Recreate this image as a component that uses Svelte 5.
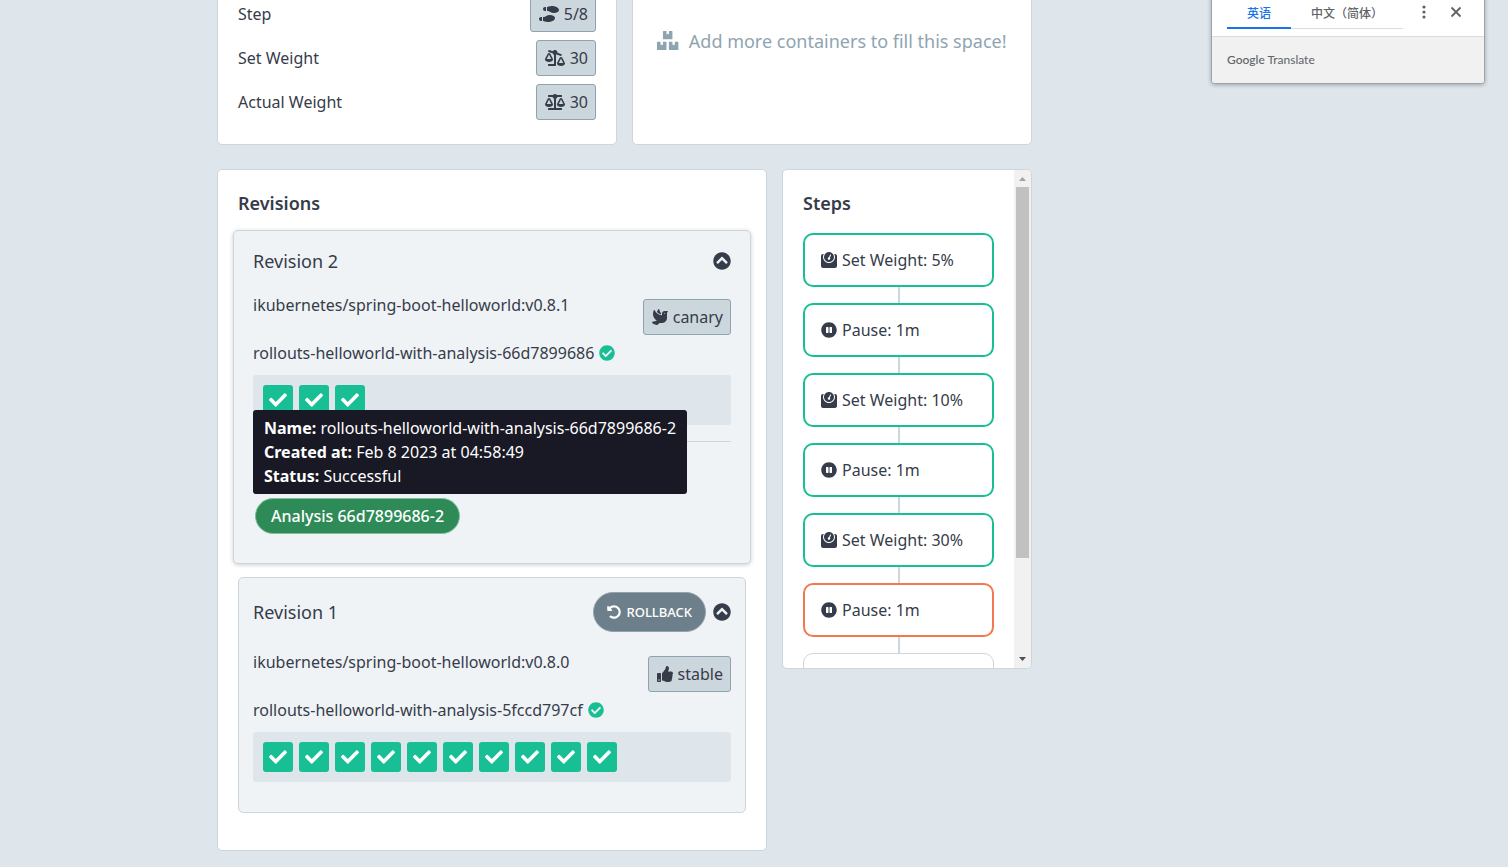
<script>
  const icons = {
    check: [512, 'M173.898 439.404l-166.4-166.4c-9.997-9.997-9.997-26.206 0-36.204l36.203-36.204c9.997-9.998 26.207-9.998 36.204 0L192 312.69 432.095 72.596c9.997-9.997 26.207-9.997 36.204 0l36.203 36.204c9.997 9.997 9.997 26.206 0 36.204l-294.4 294.401c-9.998 9.997-26.207 9.997-36.204-.001z'],
    checkCircle: [512, 'M504 256c0 136.967-111.033 248-248 248S8 392.967 8 256 119.033 8 256 8s248 111.033 248 248zM227.314 387.314l184-184c6.248-6.248 6.248-16.379 0-22.627l-22.627-22.627c-6.248-6.249-16.379-6.249-22.628 0L216 308.118l-70.059-70.059c-6.248-6.248-16.379-6.248-22.628 0l-22.627 22.627c-6.248 6.248-6.248 16.379 0 22.627l104 104c6.249 6.249 16.379 6.249 22.628.001z'],
    chevronUp: [512, 'M8 256C8 119 119 8 256 8s248 111 248 248-111 248-248 248S8 393 8 256zm231-113.9L103.500 277.600c-9.400 9.400-9.400 24.600 0 33.900l17 17c9.400 9.400 24.600 9.400 33.900 0L256 226.900l101.600 101.600c9.400 9.400 24.600 9.400 33.900 0l17-17c9.400-9.400 9.400-24.600 0-33.900L273 142.100c-9.400-9.400-24.600-9.400-34 0z'],
    pause: [512, 'M256 8C119 8 8 119 8 256s111 248 248 248 248-111 248-248S393 8 256 8zm-16 328c0 8.800-7.200 16-16 16h-48c-8.800 0-16-7.200-16-16V176c0-8.800 7.200-16 16-16h48c8.800 0 16 7.200 16 16v160zm112 0c0 8.800-7.200 16-16 16h-48c-8.800 0-16-7.200-16-16V176c0-8.800 7.200-16 16-16h48c8.800 0 16 7.200 16 16v160z'],
    weight: [512, 'M448 64h-25.980C438.440 92.330 448 125.010 448 160c0 105.870-86.130 192-192 192S64 265.870 64 160c0-34.990 9.560-67.670 25.980-96H64C28.710 64 0 92.710 0 128v320c0 35.290 28.710 64 64 64h384c35.290 0 64-28.710 64-64V128c0-35.290-28.710-64-64-64zM256 320c88.370 0 160-71.630 160-160S344.370 0 256 0 96 71.630 96 160s71.630 160 160 160zm-.3-151.940l33.580-78.360c3.500-8.170 12.940-11.920 21.030-8.410 8.120 3.480 11.880 12.890 8.410 21l-33.670 78.550C291.730 188 296 197.450 296 208c0 22.090-17.910 40-40 40s-40-17.910-40-40c0-21.980 17.760-39.770 39.700-39.940z'],
    thumbsUp: [512, 'M104 224H24c-13.255 0-24 10.745-24 24v240c0 13.255 10.745 24 24 24h80c13.255 0 24-10.745 24-24V248c0-13.255-10.745-24-24-24zM64 472c-13.255 0-24-10.745-24-24s10.745-24 24-24 24 10.745 24 24-10.745 24-24 24zM384 81.452c0 42.416-25.970 66.208-33.277 94.548h101.723c33.397 0 59.397 27.746 59.553 58.098.084 17.938-7.546 37.249-19.439 49.197l-.11.11c9.836 23.337 8.237 56.037-9.308 79.469 8.681 25.895-.069 57.704-16.382 74.757 4.298 17.598 2.244 32.575-6.148 44.632C440.202 511.587 389.616 512 346.839 512l-2.845-.001c-48.287-.017-87.806-17.598-119.560-31.725-15.957-7.099-36.821-15.887-52.651-16.178-6.540-.12-11.783-5.457-11.783-11.998v-213.770c0-3.200 1.282-6.271 3.558-8.521 39.614-39.144 56.648-80.587 89.117-113.111 14.804-14.832 20.188-37.236 25.393-58.902C282.515 39.293 291.817 0 312 0c24 0 72 8 72 81.452z'],
    undo: [512, 'M255.545 8c-66.269.119-126.438 26.233-170.860 68.685L48.971 40.971C33.851 25.851 8 36.559 8 57.941V192c0 13.255 10.745 24 24 24h134.059c21.382 0 32.090-25.851 16.971-40.971l-41.750-41.750c30.864-28.899 70.801-44.907 113.230-45.273 92.398-.798 170.283 73.977 169.484 169.442C423.236 348.009 349.816 424 256 424c-41.127 0-79.997-14.678-110.630-41.556-4.743-4.161-11.906-3.908-16.368.553L89.340 422.659c-4.872 4.872-4.631 12.815.482 17.433C133.798 479.813 192.074 504 256 504c136.966 0 247.999-111.033 248-247.998C504.001 119.193 392.354 7.755 255.545 8z'],
    boxes: [576, 'M560 288h-80v96l-32-21.300-32 21.300v-96h-80c-8.800 0-16 7.200-16 16v192c0 8.800 7.200 16 16 16h224c8.800 0 16-7.200 16-16V304c0-8.800-7.200-16-16-16zm-384-64h224c8.800 0 16-7.200 16-16V16c0-8.800-7.200-16-16-16h-80v96l-32-21.300L256 96V0h-80c-8.800 0-16 7.200-16 16v192c0 8.800 7.200 16 16 16zm64 64h-80v96l-32-21.300L96 384v-96H16c-8.800 0-16 7.200-16 16v192c0 8.800 7.200 16 16 16h224c8.800 0 16-7.200 16-16V304c0-8.800-7.200-16-16-16z'],
    scale: [640, 'M256 336h-.02c0-16.180 1.340-8.730-85.050-181.510-17.650-35.290-68.190-35.360-85.870 0C-2.060 328.750.02 320.330.02 336H0c0 44.180 57.310 80 128 80s128-35.820 128-80zM128 176l72 144H56l72-144zm511.980 160c0-16.180 1.340-8.730-85.050-181.510-17.650-35.290-68.190-35.360-85.870 0-87.120 174.260-85.040 165.840-85.040 181.510H384c0 44.180 57.310 80 128 80s128-35.820 128-80h-.02zM440 320l72-144 72 144H440zm88 128H352V153.250c23.510-10.290 41.160-31.480 46.390-57.250H528c8.840 0 16-7.160 16-16V48c0-8.840-7.160-16-16-16H383.640C369.040 12.680 346.090 0 320 0s-49.040 12.680-63.640 32H112c-8.840 0-16 7.160-16 16v32c0 8.840 7.160 16 16 16h129.610c5.230 25.760 22.870 46.960 46.390 57.250V448H112c-8.840 0-16 7.160-16 16v32c0 8.840 7.160 16 16 16h416c8.840 0 16-7.160 16-16v-32c0-8.840-7.160-16-16-16z'],
    scaleRight: [640, 'M96 464v32c0 8.840 7.160 16 16 16h224c8.840 0 16-7.160 16-16V153.250c4.560-2 8.920-4.350 12.990-7.120l142.050 47.630c8.380 2.810 17.450-1.710 20.260-10.080l10.170-30.340c2.810-8.380-1.710-17.450-10.080-20.260l-128.400-43.050c.42-3.320 1.010-6.600 1.010-10.030 0-44.180-35.820-80-80-80-29.690 0-55.300 16.360-69.110 40.370L132.960.83c-8.380-2.810-17.450 1.710-20.260 10.080l-10.170 30.340c-2.810 8.380 1.710 17.450 10.080 20.260l132 44.260c7.280 21.250 22.960 38.540 43.380 47.470V448H112c-8.840 0-16 7.160-16 16zM0 304c0 44.180 57.310 80 128 80s128-35.820 128-80h-.02c0-15.670 2.080-7.250-85.050-181.510-17.680-35.360-68.220-35.290-85.870 0C-1.320 295.270.02 287.820.02 304H0zm56-16l72-144 72 144H56zm328.020 144H384c0 44.180 57.310 80 128 80s128-35.820 128-80h-.02c0-15.670 2.080-7.250-85.050-181.510-17.680-35.360-68.220-35.290-85.870 0-86.380 172.780-85.040 165.330-85.040 181.510zM440 416l72-144 72 144H440z'],
    shoes: [640, 'M192 160h32V32h-32c-35.350 0-64 28.650-64 64s28.650 64 64 64zM0 416c0 35.350 28.650 64 64 64h32V352H64c-35.350 0-64 28.650-64 64zm337.460-128c-34.910 0-76.160 13.120-104.730 32-24.790 16.380-44.520 32-104.730 32v128l57.530 15.970c26.210 7.280 53.010 13.120 80.310 15.050 32.690 2.310 65.600.67 97.580-6.200C472.900 481.300 512 429.220 512 384c0-64-84.180-96-174.540-96zM491.420 7.190C459.440.32 426.530-1.330 393.840.99c-27.300 1.930-54.100 7.770-80.310 15.040L256 32v128c60.200 0 79.940 15.620 104.730 32 28.570 18.880 69.820 32 104.730 32C555.810 224 640 192 640 128c0-45.220-39.100-97.300-148.580-120.810z'],
    dove: [512, 'M288 167.200v-28.100c-28.200-36.300-47.100-79.300-54.100-125.200-2.100-13.500-19-18.800-27.800-8.300-21.100 24.900-37.700 54.100-48.900 86.500 34.200 38.300 80 64.600 130.800 75.100zM400 64c-44.200 0-80 35.900-80 80.100v59.400C215.600 197.300 127 133 87 41.800c-5.500-12.500-23.200-13.200-29-.9C41.400 76 32 115.200 32 156.600c0 70.800 34.100 136.900 85.100 185.900 13.200 12.700 26.100 23.200 38.900 32.800l-143.900 36C1.200 414-3.400 426.400 2.600 435.900 20 463.200 62.200 509.600 155.500 512c8 .2 16-2.800 22.100-8.100l65.200-55.900H320c88.400 0 160-71.500 160-159.900V128l32-64H400zm0 96.100c-8.800 0-16-7.200-16-16s7.200-16 16-16 16 7.200 16 16-7.200 16-16 16z'],
  };

  const summary = [
    { label: 'Step', value: '5/8', icon: 'shoes' },
    { label: 'Set Weight', value: '30', icon: 'scaleRight' },
    { label: 'Actual Weight', value: '30', icon: 'scale' },
  ];

  const steps = [
    { icon: 'weight', text: 'Set Weight: 5%', state: 'done' },
    { icon: 'pause', text: 'Pause: 1m', state: 'done' },
    { icon: 'weight', text: 'Set Weight: 10%', state: 'done' },
    { icon: 'pause', text: 'Pause: 1m', state: 'done' },
    { icon: 'weight', text: 'Set Weight: 30%', state: 'done' },
    { icon: 'pause', text: 'Pause: 1m', state: 'current' },
    { state: 'pending' },
  ];

  const revisions = [
    {
      name: 'Revision 2',
      image: 'ikubernetes/spring-boot-helloworld:v0.8.1',
      tag: 'canary',
      tagIcon: 'dove',
      replicaSet: 'rollouts-helloworld-with-analysis-66d7899686',
      pods: 3,
      raised: true,
      analysis: {
        title: 'Analysis 66d7899686-2',
        name: 'rollouts-helloworld-with-analysis-66d7899686-2',
        created: 'Feb 8 2023 at 04:58:49',
        status: 'Successful',
      },
    },
    {
      name: 'Revision 1',
      image: 'ikubernetes/spring-boot-helloworld:v0.8.0',
      tag: 'stable',
      tagIcon: 'thumbsUp',
      replicaSet: 'rollouts-helloworld-with-analysis-5fccd797cf',
      pods: 10,
      rollback: true,
    },
  ];
</script>

{#snippet icon(name)}
  <svg class="icon {name}" viewBox="0 0 {icons[name][0]} 512" aria-hidden="true">
    <path fill="currentColor" fill-rule={name === 'weight' ? 'evenodd' : 'nonzero'} d={icons[name][1]} />
  </svg>
{/snippet}

<main>
  <div class="row">
    <section class="card summary">
      {#each summary as item}
        <div class="summary-item">
          <span>{item.label}</span>
          <span class="tag">{@render icon(item.icon)}{item.value}</span>
        </div>
      {/each}
    </section>
    <section class="card empty">
      {@render icon('boxes')}
      <span>Add more containers to fill this space!</span>
    </section>
  </div>

  <div class="row">
    <section class="card revisions">
      <h3>Revisions</h3>
      {#each revisions as rev}
        <article class="revision" class:raised={rev.raised}>
          <header>
            <h4>{rev.name}</h4>
            {#if rev.rollback}
              <button class="rollback">{@render icon('undo')}ROLLBACK</button>
            {/if}
            <button class="toggle" aria-label="Collapse {rev.name}">{@render icon('chevronUp')}</button>
          </header>
          <div class="image">
            <span>{rev.image}</span>
            <span class="tag">{@render icon(rev.tagIcon)}{rev.tag}</span>
          </div>
          <div class="replica">{rev.replicaSet}{@render icon('checkCircle')}</div>
          <div class="pods">
            {#each Array(rev.pods) as _}
              <span class="pod">{@render icon('check')}</span>
            {/each}
          </div>
          {#if rev.analysis}
            <div class="analysis">
              <div class="tooltip" role="tooltip">
                <div><b>Name:</b> {rev.analysis.name}</div>
                <div><b>Created at:</b> {rev.analysis.created}</div>
                <div><b>Status:</b> {rev.analysis.status}</div>
              </div>
              <button class="run">{rev.analysis.title}</button>
            </div>
          {/if}
        </article>
      {/each}
    </section>

    <section class="card steps">
      <div class="steps-body">
        <h3>Steps</h3>
        {#each steps as step}
          <div class="step {step.state}">
            {#if step.text}
              {@render icon(step.icon)}
              <span>{step.text}</span>
            {/if}
          </div>
        {/each}
      </div>
      <div class="scrollbar" aria-hidden="true">
        <svg viewBox="0 0 17 17"><path fill="#a3a3a3" d="M5 11l3.500-4 3.500 4z" /></svg>
        <div class="track"><div class="thumb"></div></div>
        <svg viewBox="0 0 17 17"><path fill="#505050" d="M5 6l3.500 4L12 6z" /></svg>
      </div>
    </section>
  </div>
</main>

<aside class="translate">
  <div class="translate-bar">
    <div class="tabs">
      <button class="active">英语</button>
      <button>中文（简体）</button>
    </div>
    <button class="tool" aria-label="Options">
      <svg viewBox="0 0 16 16"><g fill="#5f6368"><circle cx="8" cy="3" r="1.600" /><circle cx="8" cy="8" r="1.600" /><circle cx="8" cy="13" r="1.600" /></g></svg>
    </button>
    <button class="tool" aria-label="Close">
      <svg viewBox="0 0 16 16"><path d="M3.500 3.500l9 9m0-9l-9 9" stroke="#5f6368" stroke-width="1.800" /></svg>
    </button>
  </div>
  <div class="brand"><span>Google</span> Translate</div>
</aside>

<style>
  :global(body) {
    background: #dee6ec;
    color: #363c4a;
    font: 16px/24px 'Noto Sans', 'Open Sans', sans-serif;
  }
  * {
    box-sizing: border-box;
  }
  main {
    max-width: 1074px;
    margin: -62px auto 0;
  }
  h3,
  h4 {
    margin: 0;
  }
  h3 {
    font-size: 18px;
    font-weight: 600;
  }
  h4 {
    margin-right: auto;
    font-size: 18px;
    font-weight: 400;
  }
  button {
    padding: 0;
    border: 0;
    background: none;
    color: inherit;
    font: inherit;
    cursor: pointer;
  }
  .icon {
    flex: none;
    height: 16px;
  }
  .row {
    display: flex;
    align-items: flex-start;
    gap: 15px;
    margin-bottom: 24px;
  }
  .card {
    border: 1px solid #ccd6dd;
    border-radius: 5px;
    background: #fff;
  }
  .summary,
  .empty {
    display: flex;
    flex: 0 1 400px;
    min-height: 207px;
    padding: 24px 20px;
  }
  .summary {
    flex-direction: column;
    justify-content: flex-end;
    gap: 8px;
  }
  .summary-item {
    display: flex;
    align-items: center;
    justify-content: space-between;
  }
  .tag {
    display: flex;
    align-items: center;
    gap: 5px;
    height: 36px;
    padding: 0 7px 0 8px;
    border: 1px solid #8fa4b1;
    border-radius: 3px;
    background: #ccd6dd;
  }
  .empty {
    align-items: center;
    justify-content: center;
    gap: 10px;
    padding-bottom: 26px;
    color: #8fa4b1;
    font-size: 18px;
    white-space: nowrap;
  }
  .boxes {
    height: 19px;
  }
  .revisions {
    display: flex;
    flex: 0 1 550px;
    flex-direction: column;
    padding: 21px 20px 37px;
  }
  .revisions h3 {
    margin-bottom: 15px;
  }
  .revision {
    padding: 14px 14px 30px;
    border: 1px solid #ccd6dd;
    border-radius: 5px;
    background: #eff3f6;
  }
  .raised {
    margin: 0 -5px 13px;
    padding: 10px 19px 29px;
    box-shadow: 0 1px 4px rgba(0, 0, 0, 0.2);
  }
  header {
    display: flex;
    align-items: center;
    gap: 7px;
    min-height: 40px;
  }
  .toggle {
    display: flex;
  }
  .chevronUp {
    height: 18px;
  }
  .rollback {
    display: flex;
    align-items: center;
    gap: 5px;
    height: 40px;
    padding: 0 13px;
    border: 1px solid #8fa4b1;
    border-radius: 20px;
    background: #6d7f8b;
    color: #fff;
    font-size: 13px;
    font-weight: 500;
  }
  .undo {
    height: 14px;
  }
  .image {
    display: flex;
    align-items: flex-start;
    justify-content: space-between;
    margin-top: 18px;
  }
  .image .tag {
    margin-top: 6px;
  }
  .image + .replica {
    margin-top: 6px;
  }
  .raised .image {
    margin-top: 12px;
  }
  .replica {
    display: flex;
    align-items: center;
    gap: 5px;
  }
  .checkCircle {
    color: #18be94;
  }
  .pods {
    display: flex;
    flex-wrap: wrap;
    gap: 6px;
    margin-top: 10px;
    padding: 10px;
    border-radius: 3px;
    background: #dee6ec;
  }
  .pod {
    display: flex;
    align-items: center;
    justify-content: center;
    width: 30px;
    height: 30px;
    border-radius: 3px;
    background: #18be94;
    color: #fff;
  }
  .check {
    height: 18px;
  }
  .analysis {
    position: relative;
    margin-top: 16px;
    padding: 56px 2px 0;
    border-top: 1px solid #ccd6dd;
  }
  .tooltip {
    position: absolute;
    bottom: 40px;
    left: 0;
    padding: 6px 11px;
    border-radius: 3px;
    background: #191825;
    color: #fff;
    white-space: nowrap;
  }
  .run {
    display: block;
    height: 36px;
    padding: 0 15px;
    border: 1px solid #7fc09b;
    border-radius: 18px;
    background: #2e8b57;
    color: #fff;
    font-weight: 500;
  }
  .steps {
    display: flex;
    flex: 0 1 250px;
    height: 500px;
    overflow: hidden;
  }
  .steps-body {
    flex: 1;
    padding: 21px 20px 0;
  }
  .steps h3 {
    margin-bottom: 18px;
  }
  .step {
    position: relative;
    display: flex;
    align-items: center;
    gap: 5px;
    height: 54px;
    margin-bottom: 16px;
    padding: 0 16px;
    border: 2px solid #18be94;
    border-radius: 10px;
  }
  .step:not(:last-child)::after {
    content: '';
    position: absolute;
    top: 52px;
    left: 50%;
    width: 2px;
    height: 16px;
    margin-left: -1px;
    background: #ccd6dd;
  }
  .current {
    border-color: #f4774e;
  }
  .pending {
    border: 1px solid #ccd6dd;
  }
  .scrollbar {
    display: flex;
    flex: none;
    flex-direction: column;
    width: 17px;
    background: #f1f1f1;
  }
  .scrollbar svg {
    flex: none;
    height: 17px;
  }
  .track {
    flex: 1;
    padding: 0 2px;
  }
  .thumb {
    height: 80%;
    background: #c1c1c1;
  }
  .translate {
    position: absolute;
    top: -10px;
    right: 23px;
    width: 274px;
    border: 1px solid #9ea3a6;
    border-radius: 4px;
    overflow: hidden;
    background: #fff;
    box-shadow: 0 1px 4px rgba(0, 0, 0, 0.3);
    color: #5f6368;
    font: 12px/16px 'Noto Sans CJK SC', sans-serif;
  }
  .translate-bar {
    display: flex;
    align-items: center;
    height: 46px;
    padding: 4px 20px 8px 15px;
    border-bottom: 1px solid #dadce0;
  }
  .tabs {
    display: flex;
    height: 34px;
    margin-right: 13px;
  }
  .tabs button {
    width: 112px;
    padding-top: 4px;
    border-bottom: 1px solid #dadce0;
    font-weight: 500;
    white-space: nowrap;
  }
  .tabs .active {
    width: 64px;
    border-bottom: 2px solid #1a73e8;
    color: #1a73e8;
  }
  .tool {
    display: flex;
    margin-right: 16px;
  }
  .tool + .tool {
    margin-right: 0;
  }
  .tool svg {
    width: 16px;
    height: 16px;
  }
  .brand {
    padding: 15px;
    background: #f1f1f1;
    font: 12px/16px Lato, sans-serif;
  }
  .brand span {
    font-weight: 500;
  }
</style>
